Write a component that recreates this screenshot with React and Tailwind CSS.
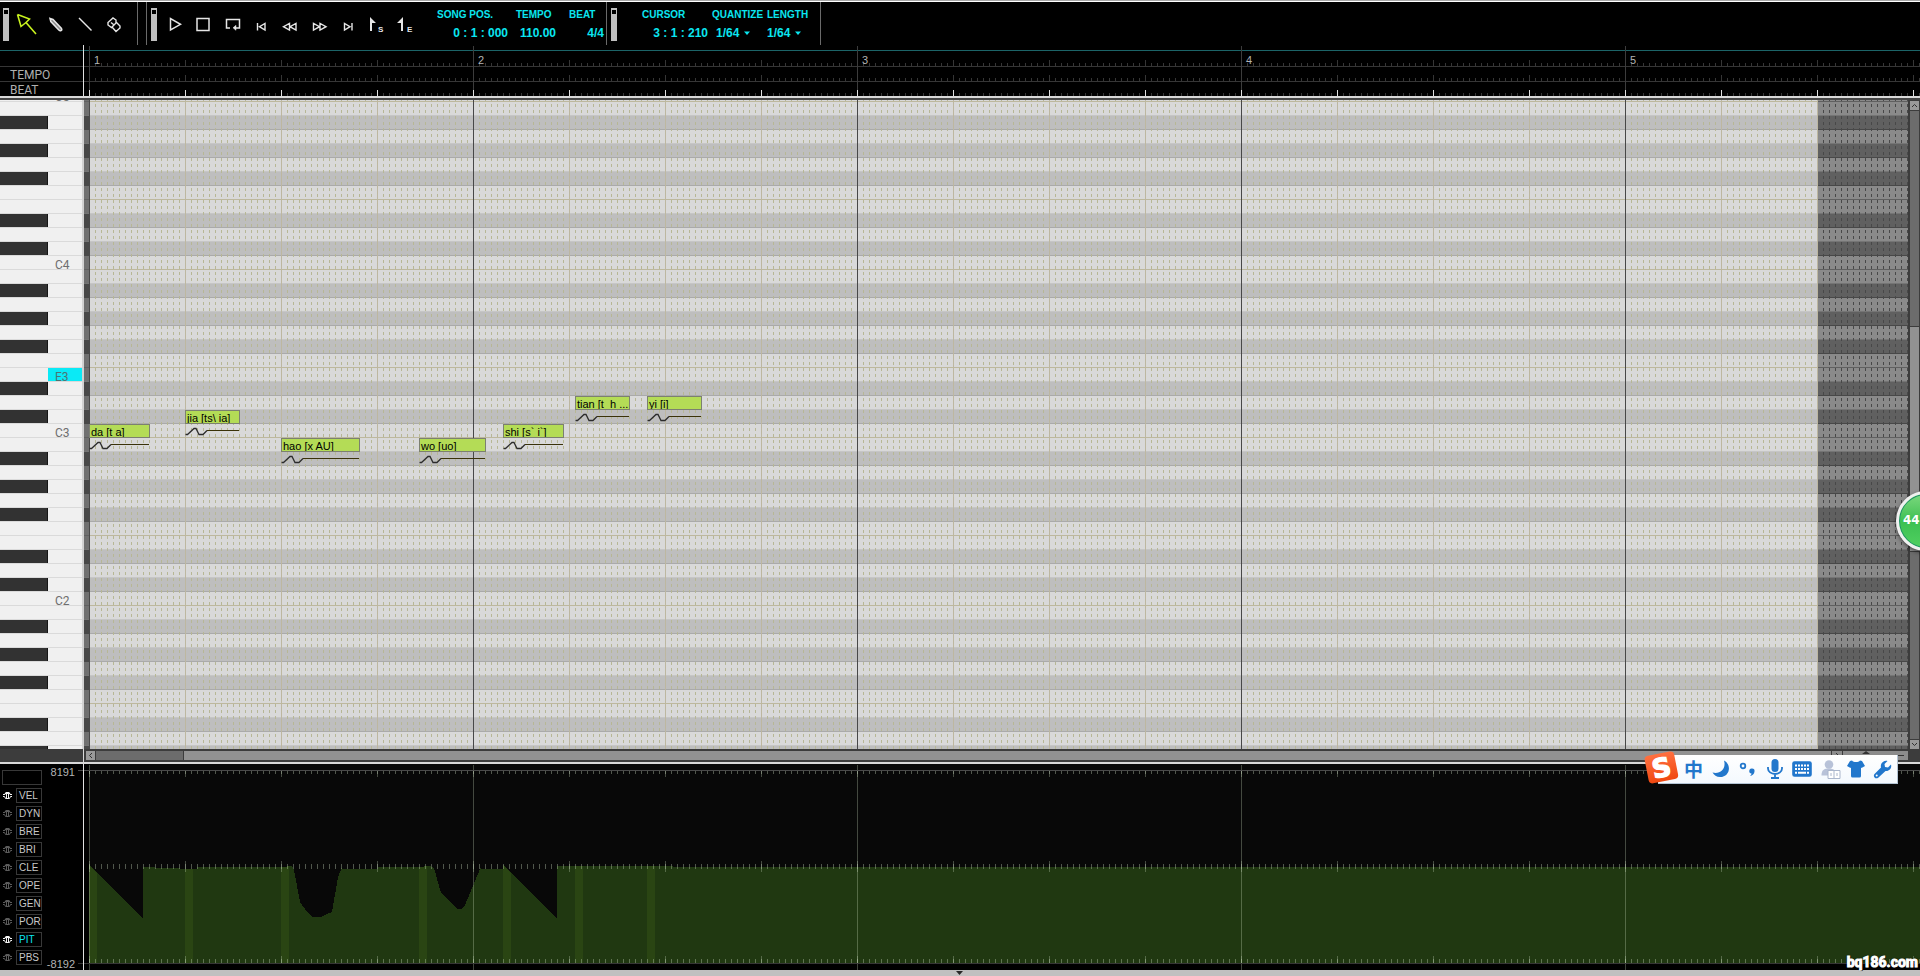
import { useId } from 'react';

const BAR = 384;
const BEAT = 96;
const ORIGIN = 5;
const BARS = [0, 1, 2, 3, 4];
const NAMES = ['C', 'B', 'A#', 'A', 'G#', 'G', 'F#', 'F', 'E', 'D#', 'D', 'C#'];

const ROWS = Array.from({ length: 48 }, (_, i) => {
  const name = NAMES[i % 12];
  const next = NAMES[(i + 1) % 12];
  const octave = 5 - Math.floor((i + 11) / 12);
  const black = name.length > 1;
  return {
    id: i,
    black,
    octave: i === 0 ? 5 : octave,
    name,
    line: black ? 'black' : next.length > 1 ? 'soft' : 'pair',
  };
});

const NOTES = [
  { text: 'da [t a]', x: 0, w: 61, row: 23 },
  { text: 'jia [ts\\ ia]', x: 96, w: 55, row: 22 },
  { text: 'hao [x AU]', x: 192, w: 79, row: 24 },
  { text: 'wo [uo]', x: 330, w: 67, row: 24 },
  { text: 'shi [s` i`]', x: 414, w: 61, row: 23 },
  { text: 'tian [t  h ...', x: 486, w: 55, row: 21 },
  { text: 'yi [i]', x: 558, w: 55, row: 21 },
];

function Ticks({ height, minor, major, minorColor = '#363636', majorColor = '#363636', top = false }) {
  const id = useId().replace(/[^a-zA-Z0-9]/g, '');
  return (
    <svg className="block w-full" height={height} shapeRendering="crispEdges" aria-hidden="true">
      <defs>
        <pattern id={'m' + id} x={ORIGIN} width="6" height={height} patternUnits="userSpaceOnUse">
          <rect y={top ? 0 : height - minor} width="1" height={minor} fill={minorColor} />
        </pattern>
        <pattern id={'b' + id} x={ORIGIN} width={BEAT} height={height} patternUnits="userSpaceOnUse">
          <rect y={top ? 0 : height - major} width="1" height={major} fill={majorColor} />
        </pattern>
      </defs>
      <rect x={ORIGIN} width="100%" height={height} fill={'url(#m' + id + ')'} />
      <rect x={ORIGIN} width="100%" height={height} fill={'url(#b' + id + ')'} />
    </svg>
  );
}

function Grip() {
  return (
    <div className="mt-[6px] h-[33px] w-[6px] bg-[#c0c0c0] px-px pt-[2px]">
      <div className="h-1 w-1 bg-black" />
    </div>
  );
}

function Tool({ label, children }) {
  return (
    <button type="button" aria-label={label} className="h-[43px] w-[29px]">
      <svg width="29" height="43" fill="none" stroke="#e6e6e6" strokeWidth="1.4">
        {children}
      </svg>
    </button>
  );
}

function Readout({ label, value, className }) {
  return (
    <div className={'flex flex-col ' + className}>
      <span className="text-[10px] leading-[14px] whitespace-nowrap">{label}</span>
      <span className="mt-1 text-right text-[12px] leading-[14px] whitespace-pre">{value}</span>
    </div>
  );
}

function Picker({ id, label, className, indent = '' }) {
  return (
    <div className={'flex flex-col ' + className}>
      <label htmlFor={id} className="text-[10px] leading-[14px] whitespace-nowrap">
        {label}
      </label>
      <div className={'mt-1 flex items-center ' + indent}>
        <select
          id={id}
          defaultValue="1/64"
          className="h-[14px] w-7 appearance-none bg-black p-0 text-[12px] leading-[14px] font-bold text-[#0ae6f0] outline-none"
        >
          <option>1/64</option>
          <option>1/32</option>
          <option>1/16</option>
        </select>
        <svg width="6" height="4" fill="#0ae6f0" aria-hidden="true">
          <path d="M0 .5h6L3 4z" />
        </svg>
      </div>
    </div>
  );
}

function Toolbar() {
  return (
    <header className="flex h-[43px] shrink-0 bg-black">
      <div className="flex w-[138px] border-r border-[#6a6a6a] pl-[3px]">
        <Grip />
        <div className="ml-[3px] flex">
          <Tool label="Select">
            <path d="M5.5 12.5L17.5 17l-3.5 3.5L24 32M5.5 12.5l3.5 12 5-4" stroke="#c8f21e" strokeWidth="1.6" />
          </Tool>
          <Tool label="Pencil">
            <path d="M9 16.500l3 1 8.500 9q.8 1.500-.4 2t-2.300-.5l-8-8.500z" strokeWidth="1.500" fill="#8a8a8a" />
          </Tool>
          <Tool label="Line">
            <path d="M9 16l12.500 12.500" />
          </Tool>
          <Tool label="Eraser">
            <path d="M9 20.500l5-4.500 3 2v3l-4.500 4.500L9 23zM12 20.500l2.500 2M17 20l4 4v2l-4 3.500-4-4.500" />
          </Tool>
        </div>
      </div>
      <div className="flex w-[469px] border-r border-[#6a6a6a]">
        <div className="ml-2 border-l border-[#6a6a6a]" />
        <div className="ml-1 flex">
          <Grip />
        </div>
        <div className="ml-1 flex">
          <Tool label="Play">
            <path d="M9.500 16.500v11.500l10-5.700z" strokeWidth="1.500" />
          </Tool>
          <Tool label="Stop">
            <rect x="7" y="16.500" width="12" height="12" strokeWidth="1.500" />
          </Tool>
          <Tool label="Repeat">
            <path d="M11 26H7.500v-8.500h13V26h-5" strokeWidth="1.500" />
            <path d="M14 25.800l3-2.500v5z" fill="#e6e6e6" strokeWidth=".5" />
          </Tool>
          <Tool label="To start">
            <path d="M9.500 21v7.500M17 21.500v6.500l-5.500-3.300z" />
          </Tool>
          <Tool label="Rewind">
            <path d="M12.500 21.500V28l-6-3.300zM19 21.500V28l-6-3.300z" />
          </Tool>
          <Tool label="Forward">
            <path d="M7.500 21.500V28l6-3.300zM14 21.500V28l6-3.300z" />
          </Tool>
          <Tool label="To end">
            <path d="M17 21v7.500M9.500 21.500v6.500l5.500-3.300z" />
          </Tool>
          <Tool label="Start marker">
            <path d="M6 15l6 6H8v8H6z" fill="#e6e6e6" stroke="none" />
            <text x="14" y="29.500" fill="#e6e6e6" stroke="none" fontSize="8" fontWeight="700">S</text>
          </Tool>
          <Tool label="End marker">
            <path d="M10 15v14H8v-8H4z" fill="#e6e6e6" stroke="none" />
            <text x="14" y="29.500" fill="#e6e6e6" stroke="none" fontSize="8" fontWeight="700">E</text>
          </Tool>
        </div>
        <div className="flex pt-[6px] pl-[15px] font-bold text-[#0ae6f0]">
          <Readout label="SONG POS." value="0 : 1 : 000" className="w-[71px]" />
          <Readout label="TEMPO" value="110.00" className="ml-2 w-10" />
          <Readout label="BEAT" value="4/4" className="ml-[13px] w-[35px]" />
        </div>
      </div>
      <div className="flex w-[214px] border-r border-[#6a6a6a] pl-1">
        <Grip />
        <div className="flex pt-[6px] pl-[25px] font-bold text-[#0ae6f0]">
          <Readout label="CURSOR" value="3 : 1 : 210" className="w-[66px] shrink-0" />
          <Picker id="quantize" label="QUANTIZE" className="ml-1 w-[51px] shrink-0" indent="pl-1" />
          <Picker id="length" label="LENGTH" className="ml-1 w-[50px] shrink-0" />
        </div>
      </div>
    </header>
  );
}

function Ruler() {
  return (
    <section className="flex shrink-0 bg-black">
      <div className="w-[84px] shrink-0 border-r border-[#e0e0e0] font-[Roboto,sans-serif] text-[12px] text-[#b0b0b0]">
        <div className="h-[22px] border-b border-[#363636] pt-[5px]">
          <div className="h-px bg-[#1c6468]" />
        </div>
        <div className="h-[15px] border-b border-[#363636] pl-[10px] leading-[16px]">TEMPO</div>
        <div className="h-[14px] pl-[10px] leading-[16px]">BEAT</div>
      </div>
      <div className="relative min-w-0 flex-1 overflow-hidden">
        <div className="h-[5px]" />
        <div className="h-px bg-[#1c6468]" />
        <div className="border-b border-[#363636]">
          <Ticks height={15} minor={3} major={6} />
        </div>
        <div className="border-b border-[#363636]">
          <Ticks height={14} minor={3} major={6} />
        </div>
        <Ticks height={14} minor={3} major={6} majorColor="#e0e0e0" />
        <div className="absolute top-px bottom-[6px] left-[5px] flex">
          {BARS.map((b) => (
            <div key={b} className="w-[384px] border-l border-[#3c3c3c] pt-1 pl-1 text-[11px] leading-[20px] text-[#b4b4b4]">
              {b + 1}
            </div>
          ))}
        </div>
      </div>
    </section>
  );
}

function Keyboard() {
  return (
    <div className="flex w-[84px] shrink-0 flex-col overflow-hidden border-r-2 border-[#d2d2d2] bg-[#f0f0f0]">
      {ROWS.map((r) => {
        const active = r.name === 'E' && r.octave === 3;
        const label = r.name === 'C' || active ? r.name + r.octave : '';
        return (
          <div
            key={r.id}
            className={'flex shrink-0 items-end overflow-hidden border-b border-[#dadada] ' + (r.id === 0 ? 'h-[2px]' : 'h-[14px]')}
          >
            <div className={'-mb-px h-[14px] w-12 shrink-0 ' + (r.black ? 'border-r border-b border-[#161616] bg-[#323232]' : '')} />
            <div
              className={
                'h-[13px] flex-1 pl-[7px] font-[Roboto,sans-serif] text-[12px] leading-[18px] ' +
                (active ? 'bg-[#0aeaf6] text-[#4c7474]' : 'text-[#6e6e6e]')
              }
            >
              {label}
            </div>
          </div>
        );
      })}
    </div>
  );
}

const LIGHT = { black: 'border-[#aaaaaa]', soft: 'border-[#c6c6c6]', pair: 'border-[#bdb89e]' };
const DARK = { black: 'border-[#484848]', soft: 'border-[#757575]', pair: 'border-[#606060]' };

function Roll() {
  return (
    <div className="relative min-w-0 flex-1 overflow-hidden">
      {ROWS.map((r) => (
        <div key={r.id} className={'flex ' + (r.id === 0 ? 'h-[2px]' : 'h-[14px]')}>
          <div className={'w-[5px] border-b ' + (r.black ? 'bg-[#484848] ' : 'bg-[#707070] ') + DARK[r.line]} />
          <div className={'w-[1729px] border-b ' + (r.black ? 'bg-[#bebebe] ' : 'bg-[#d9d9d9] ') + LIGHT[r.line]} />
          <div className={'flex-1 border-b ' + (r.black ? 'bg-[#606060] ' : 'bg-[#8a8a8a] ') + DARK[r.line]} />
        </div>
      ))}
      <svg className="absolute inset-0 h-full w-full" shapeRendering="crispEdges" aria-hidden="true">
        <defs>
          <pattern id="dash" x={ORIGIN} y="4" width="6" height="6" patternUnits="userSpaceOnUse">
            <rect width="1" height="3" fill="#b7b795" />
          </pattern>
          <pattern id="dashDark" x={ORIGIN} y="4" width="6" height="6" patternUnits="userSpaceOnUse">
            <rect width="1" height="3" fill="#484848" />
          </pattern>
          <pattern id="beats" x={ORIGIN} width={BEAT} height="14" patternUnits="userSpaceOnUse">
            <rect width="1" height="14" fill="#bdb7a0" />
          </pattern>
        </defs>
        <rect x={ORIGIN} width="1729" height="100%" fill="url(#dash)" />
        <rect x={ORIGIN} width="1729" height="100%" fill="url(#beats)" />
        <rect x="1734" width="100%" height="100%" fill="url(#dashDark)" />
        {BARS.map((b) => (
          <rect key={b} x={ORIGIN + b * BAR} width="1" height="100%" fill="#484848" />
        ))}
      </svg>
      {NOTES.map((n) => (
        <div
          key={n.text}
          className="absolute"
          style={{ left: ORIGIN + n.x, top: 2 + n.row * 14, width: n.w }}
        >
          <div className="h-[14px] overflow-hidden border border-[#7c8070] bg-[#b4dc56] pl-px text-[11px] leading-[14px] whitespace-pre text-black">
            {n.text}
          </div>
          <svg className="block" width={n.w} height="12" fill="none" aria-hidden="true">
            <path d="M.5 10.500h2L9 4.500h2l3 6h4L22 6.500" stroke="#2c2c2c" strokeWidth="1.300" />
            <path d={'M22 6.500H' + (n.w - 1)} stroke="#3a3208" shapeRendering="crispEdges" />
          </svg>
        </div>
      ))}
    </div>
  );
}

function VScroll() {
  return (
    <div className="flex w-3 shrink-0 flex-col gap-px bg-[#3c3c3c] pt-px pr-px pl-[2px]">
      <button type="button" aria-label="Scroll up" className="h-[9px] bg-[#9a9a9a]">
        <svg width="9" height="9" fill="none" stroke="#333" className="block">
          <path d="M2 6l2.500-2.500L7 6" />
        </svg>
      </button>
      <div className="h-[215px] bg-[#6c6c6c]" />
      <div className="h-[224px] bg-[#929292]" />
      <div className="flex-1 bg-[#6c6c6c]" />
      <button type="button" aria-label="Scroll down" className="h-[9px] bg-[#9a9a9a]">
        <svg width="9" height="9" fill="none" stroke="#333" className="block">
          <path d="M2 3l2.500 2.500L7 3" />
        </svg>
      </button>
    </div>
  );
}

function HScroll() {
  return (
    <div className="flex h-[13px] shrink-0 bg-[#3c3c3c]">
      <div className="w-[84px] shrink-0 border-r border-[#d8d8d8]" />
      <div className="flex min-w-0 flex-1 gap-px pt-[2px] pr-3 pb-[2px] pl-[2px]">
        <button type="button" aria-label="Scroll left" className="w-[9px] bg-[#9a9a9a]">
          <svg width="9" height="9" fill="none" stroke="#333" className="block">
            <path d="M6 2L3.500 4.500 6 7" />
          </svg>
        </button>
        <div className="w-[87px] bg-[#6c6c6c]" />
        <div className="flex-1 bg-[#929292]" />
        <button type="button" aria-label="Scroll right" className="w-[10px] bg-[#8c8c8c]">
          <svg width="9" height="9" fill="none" stroke="#333" className="block">
            <path d="M4 2l2.500 2.500L4 7" />
          </svg>
        </button>
        <div className="w-[65px] bg-[#8c8c8c]">
          <svg width="65" height="9" fill="#333" className="block">
            <path d="M19 3l4-3 4 3zM55 4h6v1h-6z" />
          </svg>
        </div>
      </div>
    </div>
  );
}

const PARAMS = ['VEL', 'DYN', 'BRE', 'BRI', 'CLE', 'OPE', 'GEN', 'POR', 'PIT', 'PBS'];

function Eye({ on }) {
  return (
    <svg width="11" height="9" fill="none" stroke={on ? '#f4f4f4' : '#5c5c5c'} aria-hidden="true">
      <path d="M1 3.500h2v-1h5v1h2M1 5.500h1.500l1 2h4l1-2H10" />
      <path d="M3.500 1.500h4M4.500 3v4M6.500 3v4" />
    </svg>
  );
}

const CURVE =
  'M5 101L59 154V103H71V104H96V105H113V103H203V102H206L209 103L210 106L216 138L221 145L228 153H237L245 149L248 148L254 113L258 103V105H294V103H340V102H346L350 104L357 129L364 136L374 145H378L381 141L396 105V104H397V105H419V101L473 154V102H589V103H6000V199H5Z';

function ControlPanel() {
  const tick = '#cfe0c4';
  return (
    <section className="flex h-[206px] shrink-0 bg-black">
      <div className="flex w-[84px] shrink-0 border-r border-[#e0e0e0]">
        <div className="flex w-[42px] flex-col gap-[3px] pt-[6px] pl-[2px]">
          <div className="h-[15px] border border-[#383838]" />
          {PARAMS.map((p) => (
            <button key={p} type="button" className="flex h-[15px] items-center gap-[3px]">
              <Eye on={p === 'VEL' || p === 'PIT'} />
              <span
                className={
                  'h-[15px] w-[26px] border border-[#383838] pl-[2px] text-left text-[10px] leading-[14px] ' +
                  (p === 'PIT' ? 'text-[#0ae6f0]' : 'text-[#c8c8c8]')
                }
              >
                {p}
              </span>
            </button>
          ))}
        </div>
        <div className="flex flex-1 flex-col gap-[178px] pt-px text-[11px] leading-[14px] text-[#b4b4b4]">
          <div className="flex justify-end">
            8191
            <span className="mt-[5px] ml-[3px] h-px w-[5px] bg-[#4a4a4a]" />
          </div>
          <div className="flex justify-end">
            -8192
            <span className="mt-[6px] ml-[3px] h-px w-[5px] bg-[#363636]" />
          </div>
        </div>
      </div>
      <svg className="block h-[206px] min-w-0 flex-1 overflow-hidden" shapeRendering="crispEdges" role="img" aria-label="PIT curve">
        <defs>
          <pattern id="edgeTop" x={ORIGIN} width="6" height="206" patternUnits="userSpaceOnUse">
            <rect y="7" width="1" height="3" fill={tick} />
            <rect y="100" width="1" height="5" fill={tick} />
            <rect y="195" width="1" height="4" fill={tick} />
          </pattern>
          <pattern id="edgeBeat" x={ORIGIN} width={BEAT} height="206" patternUnits="userSpaceOnUse">
            <rect y="7" width="1" height="6" fill={tick} />
            <rect y="97" width="1" height="11" fill={tick} />
            <rect y="192" width="1" height="7" fill={tick} />
          </pattern>
          <clipPath id="curve">
            <path d={CURVE} />
          </clipPath>
        </defs>
        <rect x="5" width="100%" height="200" fill="#080808" />
        <path d={CURVE} fill="#203811" />
        <g clipPath="url(#curve)" fill="#2a4513">
          {NOTES.map((n) => (
            <rect key={n.text} x={ORIGIN + n.x} width="8" height="199" />
          ))}
        </g>
        <rect x={ORIGIN} width="100%" height="206" fill="url(#edgeTop)" opacity=".36" />
        <rect x={ORIGIN} width="100%" height="206" fill="url(#edgeBeat)" opacity=".3" />
        {BARS.map((b) => (
          <rect key={b} x={ORIGIN + b * BAR} y="1" width="1" height="205" fill={tick} opacity=".3" />
        ))}
        <rect y="6" width="100%" height="1" fill="#4a4a4a" />
        <rect y="199" width="100%" height="1" fill="#363636" />
      </svg>
    </section>
  );
}

function InputBar() {
  const blue = '#2277cc';
  return (
    <div className="absolute right-[22px] bottom-[192px] flex h-[29px] w-[240px] items-center border-r border-b border-[#b4c4d4] bg-gradient-to-b from-white to-[#f4f9fe] pl-[22px]">
      <svg className="absolute -top-[5px] -left-[16px]" width="40" height="38" aria-label="Sogou" role="img">
        <defs>
          <linearGradient id="sogou" x1="0" y1="0" x2="0" y2="1">
            <stop offset="0" stopColor="#ff7040" />
            <stop offset="1" stopColor="#f04810" />
          </linearGradient>
        </defs>
        <g transform="rotate(-11 19 18)">
          <rect x="4.500" y="3.500" width="30" height="28" rx="4" fill="url(#sogou)" />
          <text x="19.500" y="27" textAnchor="middle" fill="#fff" stroke="#fff" strokeWidth="1.500" fontFamily="DejaVu Sans, sans-serif" fontSize="26" fontWeight="700">
            S
          </text>
        </g>
      </svg>
      <button type="button" className="w-[27px] pb-px text-center font-['Noto_Sans_CJK_SC',sans-serif] text-[19px] leading-[28px] font-bold text-[#2277cc]">
        中
      </button>
      <button type="button" aria-label="Moon" className="flex w-[27px] justify-center pl-px">
        <svg width="18" height="18" fill={blue}>
          <path d="M12 .5c8 4 6 16.500-4 16.500-3.500 0-6-2-7.500-4.500C8 14.500 14.500 9 12 .5z" />
        </svg>
      </button>
      <button type="button" aria-label="Punctuation" className="flex w-[27px] justify-center">
        <svg width="17" height="16" fill="none" stroke={blue} strokeWidth="1.800">
          <circle cx="4" cy="5" r="2.300" />
          <path d="M13 7.500a2.600 2.600 0 0 1 2.500 3c-.2 2.500-2 4.300-4.500 4.500 1-1 1.500-1.700 1.500-2.500a2.500 2.500 0 0 1 .5-5z" fill={blue} stroke="none" />
        </svg>
      </button>
      <button type="button" aria-label="Voice" className="flex w-[27px] justify-center">
        <svg width="16" height="20" fill="none" stroke={blue} strokeWidth="1.800">
          <rect x="4.500" y="0" width="7" height="13" rx="3.500" fill={blue} stroke="none" />
          <path d="M1 8v1.500a7 5.500 0 0 0 14 0V8M8 15v4M4 19h8" />
        </svg>
      </button>
      <button type="button" aria-label="Keyboard" className="flex w-[27px] justify-center">
        <svg width="20" height="16" fill="none" stroke={blue} strokeWidth="1.600">
          <rect x="1" y="1" width="18" height="14" rx="1.500" fill={blue} />
          <path d="M3 4.500h14M3 8h14" stroke="#fff" strokeWidth="2" strokeDasharray="2 1" />
          <path d="M3 11.700h2m1 0h8m1 0h2" stroke="#fff" strokeWidth="2" />
        </svg>
      </button>
      <button type="button" aria-label="Account" className="flex w-[28px] justify-end pr-[2px]">
        <svg width="20" height="19" fill="#b8c2d8">
          <circle cx="8" cy="4.500" r="4.300" />
          <path d="M.5 15.500C.5 10 3 8.500 8 8.500s7.500 2 7.500 7z" />
          <path d="M7 10.500h12v8H7zM13 10.500v8M10 13v3M16 13v3" fill="#fff" stroke="#aab6cc" />
        </svg>
      </button>
      <button type="button" aria-label="Skin" className="flex w-[26px] justify-center">
        <svg width="18" height="18" fill={blue}>
          <path d="M5 .5c1.500 2 6.500 2 8 0l2 .5 3 5-3.500 2-.5-.5V16q0 1.500-1.500 1.500h-7Q4 17.500 4 16V7.500L3.500 8 0 6l3-5z" />
        </svg>
      </button>
      <button type="button" aria-label="Tools" className="flex w-[27px] justify-center">
        <svg width="19" height="19" fill={blue}>
          <path d="M14.500 1L11.500 4l.5 3 3 .5 3-3c1 3.500-1.500 7-5.500 6.500L5.500 17.500c-3 2.500-6-1-4-3.500L8 7.500C7 3.500 10.500 0 14.500 1z" />
          <circle cx="3.700" cy="15.500" r="1" fill="#fff" />
        </svg>
      </button>
    </div>
  );
}

export default function App() {
  return (
    <div className="relative flex h-screen min-h-[600px] flex-col overflow-hidden bg-black font-['Liberation_Sans',Arial,sans-serif]">
      <div className="h-[2px] shrink-0 border-t border-[#a8a8a8] bg-white" />
      <Toolbar />
      <Ruler />
      <div className="h-1 shrink-0 border-t-2 border-[#d8d8d8] bg-[#444444]" />
      <main className="flex min-h-0 flex-1">
        <Keyboard />
        <Roll />
        <VScroll />
      </main>
      <HScroll />
      <div className="h-[2px] shrink-0 bg-[#d8d8d8]" />
      <ControlPanel />
      <footer className="flex h-[6px] shrink-0 justify-center bg-[#c0c0c0] pt-px">
        <svg width="8" height="4" fill="#282828" aria-hidden="true">
          <path d="M0 0h7L3.500 4z" />
        </svg>
      </footer>
      <div className="absolute top-[491px] -right-9 h-[60px] w-[60px] rounded-full border-[3px] border-[#f0f0f0] bg-gradient-to-b from-[#7ad87e] via-[#3cc052] to-[#50d060] pl-1 font-['DejaVu_Sans',sans-serif] text-[12px] leading-[52px] font-bold text-white shadow-[0_2px_4px_rgba(0,0,0,0.5),inset_0_0_0_1px_#1e9068]">
        44
      </div>
      <InputBar />
      <div className="absolute right-[2px] bottom-1 font-[Roboto,sans-serif] text-[14px] leading-5 font-bold text-white [-webkit-text-stroke:1px_white] [text-shadow:0_0_2px_black,1px_1px_0_black]">
        bq186.com
      </div>
    </div>
  );
}
